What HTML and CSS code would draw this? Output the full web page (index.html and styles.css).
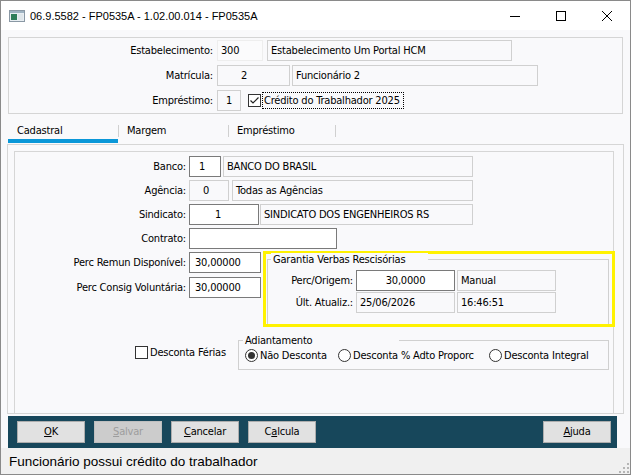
FILE: index.html
```html
<!DOCTYPE html>
<html lang="pt-BR">
<head>
<meta charset="utf-8">
<title>FP0535A</title>
<link rel="stylesheet" href="styles.css">
</head>
<body>
<div class="window">
  <header class="titlebar">
    <svg class="appicon" width="16" height="12" viewBox="0 0 16 12">
      <rect x="0.5" y="0.5" width="15" height="11" fill="#e8eef2" stroke="#8a98a4"/>
      <rect x="1" y="1" width="14" height="2" fill="#9fb3c2"/>
      <rect x="2" y="4" width="6" height="6" fill="#2f7d5a"/>
      <rect x="9" y="4" width="5" height="6" fill="#dfe6ea"/>
    </svg>
    <span class="title">06.9.5582 - FP0535A - 1.02.00.014 - FP0535A</span>
    <div class="wincontrols">
      <span class="wbtn"><svg width="10" height="10" viewBox="0 0 10 10"><path d="M0 5.5H10" stroke="#000" stroke-width="1"/></svg></span>
      <span class="wbtn"><svg width="10" height="10" viewBox="0 0 10 10"><rect x="0.5" y="0.5" width="9" height="9" fill="none" stroke="#000"/></svg></span>
      <span class="wbtn"><svg width="10" height="10" viewBox="0 0 10 10"><path d="M0 0L10 10M10 0L0 10" stroke="#000" stroke-width="1"/></svg></span>
    </div>
  </header>

  <main class="client">
    <section class="hpanel">
      <div class="hrow">
        <span class="hlbl">Estabelecimento:</span>
        <span class="fld faint w-est">300</span>
        <span class="fld ro w-estd gap4">Estabelecimento Um Portal HCM</span>
      </div>
      <div class="hrow">
        <span class="hlbl">Matrícula:</span>
        <span class="fld ro w-mat num-mat">2</span>
        <span class="fld ro w-matd gap2">Funcionário 2</span>
      </div>
      <div class="hrow">
        <span class="hlbl">Empréstimo:</span>
        <span class="fld ro w-emp center">1</span>
        <span class="check checked chk-credito">
          <svg width="11" height="11" viewBox="0 0 11 11"><path d="M1.5 5.5L4 8L9.5 2.5" fill="none" stroke="#222" stroke-width="1.2"/></svg>
        </span>
        <span class="focuslbl">Crédito do Trabalhador 2025</span>
      </div>
    </section>

    <nav class="tabs">
      <span class="tab tab-active w-t1">Cadastral</span>
      <span class="tabsep"></span>
      <span class="tab w-t2">Margem</span>
      <span class="tabsep"></span>
      <span class="tab w-t3">Empréstimo</span>
      <span class="tabsep"></span>
    </nav>

    <section class="page">
      <div class="inner">
        <div class="fields">
          <div class="frow">
            <span class="flbl">Banco:</span>
            <span class="fld edit w-banco pad-banco">1</span>
            <span class="fld ro w-bancod gap2">BANCO DO BRASIL</span>
          </div>
          <div class="frow">
            <span class="flbl">Agência:</span>
            <span class="fld ro w-ag pad-ag">0</span>
            <span class="fld ro w-agd gap3">Todas as Agências</span>
          </div>
          <div class="frow">
            <span class="flbl">Sindicato:</span>
            <span class="fld edit w-sind pad-sind">1</span>
            <span class="fld ro w-sindd gap1">SINDICATO DOS ENGENHEIROS RS</span>
          </div>
          <div class="frow">
            <span class="flbl">Contrato:</span>
            <span class="fld edit w-contr"></span>
          </div>
        </div>

        <div class="mid">
          <div class="perccol">
            <div class="frow">
              <span class="flbl">Perc Remun Disponível:</span>
              <span class="fld edit w-perc pad-perc">30,00000</span>
            </div>
            <div class="frow">
              <span class="flbl">Perc Consig Voluntária:</span>
              <span class="fld edit w-perc pad-perc">30,00000</span>
            </div>
          </div>
          <div class="highlight">
            <div class="group garantia">
              <span class="gcap gcap-gar">Garantia Verbas Rescisórias</span>
              <div class="grow">
                <span class="glbl">Perc/Origem:</span>
                <span class="fld edit w-g center">30,0000</span>
                <span class="fld ro w-g gap2">Manual</span>
              </div>
              <div class="grow">
                <span class="glbl">Últ. Atualiz.:</span>
                <span class="fld ro w-g">25/06/2026</span>
                <span class="fld ro w-g gap2">16:46:51</span>
              </div>
            </div>
          </div>
        </div>

        <div class="opts">
          <label class="chkwrap">
            <span class="check"></span>
            <span>Desconta Férias</span>
          </label>
          <div class="group adiant">
            <span class="gcap gcap-adi">Adiantamento</span>
            <span class="radio w-r1"><span class="rdot checked"></span>Não Desconta</span>
            <span class="radio w-r2"><span class="rdot"></span>Desconta % Adto Proporc</span>
            <span class="radio"><span class="rdot"></span>Desconta Integral</span>
          </div>
        </div>
      </div>
    </section>

    <footer class="buttonbar">
      <span class="btn"><u>O</u>K</span>
      <span class="btn disabled"><u>S</u>alvar</span>
      <span class="btn"><u>C</u>ancelar</span>
      <span class="btn">C<u>a</u>lcula</span>
      <span class="btn btn-right"><u>A</u>juda</span>
    </footer>
  </main>

  <div class="status">
    <span>Funcionário possui crédito do trabalhador</span>
    <svg class="grip" width="10" height="10" viewBox="0 0 10 10">
      <rect x="8" y="0" width="2" height="2" fill="#b5b5b5"/>
      <rect x="4" y="4" width="2" height="2" fill="#b5b5b5"/>
      <rect x="8" y="4" width="2" height="2" fill="#b5b5b5"/>
      <rect x="0" y="8" width="2" height="2" fill="#b5b5b5"/>
      <rect x="4" y="8" width="2" height="2" fill="#b5b5b5"/>
      <rect x="8" y="8" width="2" height="2" fill="#b5b5b5"/>
    </svg>
  </div>
</div>
</body>
</html>
```

FILE: styles.css
```css
* { box-sizing: border-box; }
html, body { margin: 0; padding: 0; }
body {
  width: 631px;
  height: 475px;
  overflow: hidden;
  background: #ffffff;
  font-family: "DejaVu Sans Condensed", "DejaVu Sans", sans-serif;
  font-size: 11px;
  letter-spacing: -0.2px;
  color: #000;
}
.window {
  width: 631px;
  height: 475px;
  border: 1px solid #8a8a8a;
  display: flex;
  flex-direction: column;
  background: #f9f9fb;
}

/* title bar */
.titlebar {
  height: 29px;
  flex: none;
  background: #ffffff;
  display: flex;
  align-items: center;
}
.appicon { margin-left: 8px; margin-right: 5px; flex: none; }
.title {
  font-family: "Liberation Sans", Arial, sans-serif;
  font-size: 11px;
  letter-spacing: 0;
}
.wincontrols { margin-left: auto; display: flex; height: 29px; }
.wbtn { width: 46px; height: 29px; display: flex; align-items: center; justify-content: center; }

/* client */
.client {
  height: 418px;
  flex: none;
  display: flex;
  flex-direction: column;
  background: #f9f9fb;
}
.hpanel {
  margin: 7px 7px 0;
  height: 77px;
  flex: none;
  border: 1px solid #d5d5d5;
  padding-top: 2px;
  display: flex;
  flex-direction: column;
  gap: 4px;
}
.hrow { display: flex; align-items: center; height: 21px; }
.hlbl { width: 204px; text-align: right; margin-right: 4px; white-space: nowrap; }

.fld {
  height: 21px;
  line-height: 19px;
  border: 1px solid #d0d0d0;
  padding: 0 3px;
  white-space: nowrap;
  overflow: hidden;
  flex: none;
}
.fld.edit { border-color: #7a7a7a; background: #ffffff; }
.fld.ro { background: #f9f9fb; }
.fld.faint { border-color: #eeeeee; background: #fbfbfc; }
.center { text-align: center; }
.gap1 { margin-left: 1px; }
.gap2 { margin-left: 2px; }
.gap3 { margin-left: 3px; }
.gap4 { margin-left: 4px; }

.w-est { width: 46px; }
.w-estd { width: 245px; }
.w-mat { width: 73px; }
.num-mat { padding-left: 23px; }
.w-matd { width: 246px; }
.w-emp { width: 24px; padding: 0; }

.check {
  width: 13px;
  height: 13px;
  border: 1px solid #333;
  background: #fff;
  display: inline-flex;
  align-items: center;
  justify-content: center;
  flex: none;
}
.chk-credito { margin-left: 7px; }
.focuslbl {
  margin-left: 1px;
  width: 142px;
  height: 17px;
  line-height: 15px;
  border: 1px dotted #000;
  padding-left: 1px;
  white-space: nowrap;
}

/* tabs */
.tabs {
  display: flex;
  align-items: flex-start;
  height: 30px;
  flex: none;
  margin-left: 7px;
}
.tab {
  height: 29px;
  padding-top: 10px;
  padding-left: 8px;
  line-height: 13px;
  white-space: nowrap;
}
.tab-active { border-bottom: 4px solid #0a97d8; padding-left: 9px; }
.w-t1 { width: 110px; }
.w-t2 { width: 109px; }
.w-t3 { width: 106px; }
.tabsep { width: 1px; height: 12px; margin-top: 11px; background: #d0d0d0; }

/* page */
.page {
  margin: 0 6px;
  height: 270px;
  flex: none;
  border: 1px solid #d6d6d6;
}
.inner {
  margin: 6px 0 0 6px;
  width: 600px;
  height: 262px;
  border: 1px solid #d6d6d6;
  border-bottom: none;
  padding-top: 4px;
}
.fields { display: flex; flex-direction: column; gap: 3px; }
.frow { display: flex; align-items: center; height: 21px; }
.flbl { width: 171px; margin-right: 3px; text-align: right; white-space: nowrap; flex: none; }

.w-banco { width: 32px; }
.pad-banco { padding-left: 9px; }
.w-bancod { width: 250px; }
.w-ag { width: 40px; }
.pad-ag { padding-left: 13px; }
.w-agd { width: 241px; }
.w-sind { width: 70px; }
.pad-sind { padding-left: 25px; }
.w-sindd { width: 213px; }
.w-contr { width: 148px; }
.w-perc { width: 72px; }
.pad-perc { padding-left: 5px; }

.mid { display: flex; margin-top: 2px; }
.perccol { padding-top: 1px; display: flex; flex-direction: column; gap: 4px; }
.highlight {
  margin-left: 2px;
  width: 352px;
  height: 76px;
  border: 3px solid #fff200;
  flex: none;
}
.group {
  position: relative;
  border: 1px solid #d0d0d0;
}
.gcap {
  position: absolute;
  top: -7px;
  padding: 0 2px;
  line-height: 13px;
  background: #f9f9fb;
  white-space: nowrap;
}
.garantia {
  margin: 5px 3px 0 1px;
  height: 65px;
  border-bottom: none;
  padding-top: 10px;
  display: flex;
  flex-direction: column;
  gap: 1px;
}
.gcap-gar { left: 3px; width: 157px; }
.grow { display: flex; align-items: center; height: 21px; }
.glbl { width: 85px; margin-right: 3px; text-align: right; white-space: nowrap; }
.w-g { width: 99px; }

.opts { display: flex; align-items: flex-start; margin-top: 13px; padding-left: 120px; }
.chkwrap { width: 103px; display: flex; align-items: center; margin-top: 6px; gap: 2px; white-space: nowrap; }
.adiant {
  width: 371px;
  height: 30px;
  display: flex;
  align-items: center;
  padding-left: 6px;
}
.gcap-adi { left: 4px; width: 156px; }
.radio { display: flex; align-items: center; white-space: nowrap; }
.w-r1 { width: 93px; }
.w-r2 { width: 151px; }
.rdot {
  width: 13px;
  height: 13px;
  border: 1px solid #333;
  border-radius: 50%;
  background: #fff;
  margin-right: 2px;
  flex: none;
  display: flex;
  align-items: center;
  justify-content: center;
}
.rdot.checked::after {
  content: "";
  width: 7px;
  height: 7px;
  border-radius: 50%;
  background: #333;
}

/* buttons */
.buttonbar {
  margin: 2px 0 0 7px;
  width: 609px;
  height: 32px;
  flex: none;
  background: #17475b;
  display: flex;
  align-items: flex-start;
  gap: 9px;
  padding: 5px 6px 0 9px;
}
.btn {
  width: 68px;
  height: 22px;
  line-height: 20px;
  border: 1px solid #adadad;
  background: #e1e1e1;
  text-align: center;
  flex: none;
}
.btn.disabled { background: #cccccc; border-color: #bfbfbf; color: #9d9d9d; }
.btn-right { margin-left: auto; }

/* status */
.status {
  height: 26px;
  flex: none;
  background: #f0f0f0;
  display: flex;
  align-items: center;
  padding-left: 8px;
  font-family: "Liberation Sans", Arial, sans-serif;
  font-size: 13.5px;
  letter-spacing: 0;
  position: relative;
}
.grip { position: absolute; right: 1px; bottom: 1px; }
```
